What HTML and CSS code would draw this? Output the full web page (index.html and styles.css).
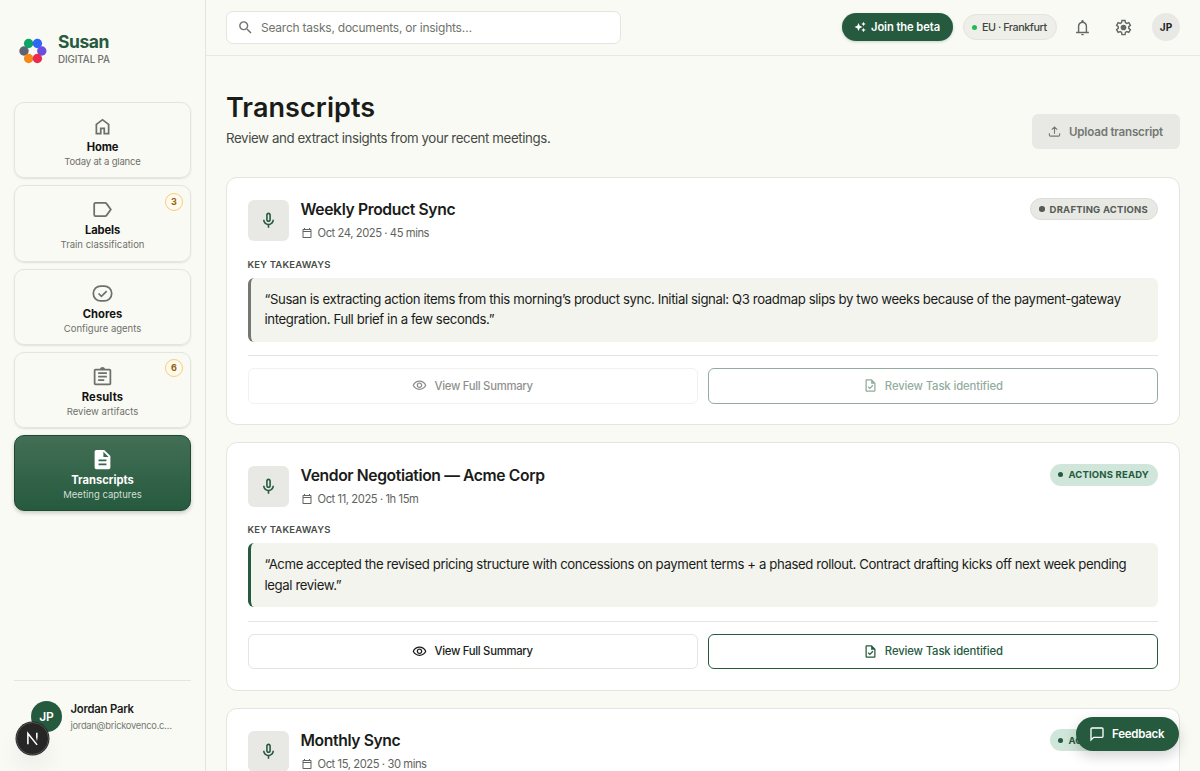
FILE: index.html
```html
<!DOCTYPE html>
<html lang="en">
<head>
<meta charset="utf-8">
<title>Susan – Transcripts</title>
<link rel="stylesheet" href="styles.css">
</head>
<body>
<svg class="defs" width="0" height="0">
  <symbol id="mic" viewBox="0 0 24 24"><path d="M12 14c1.660 0 3-1.340 3-3V5c0-1.660-1.340-3-3-3S9 3.340 9 5v6c0 1.660 1.340 3 3 3zm-1-9c0-.550.450-1 1-1s1 .450 1 1v6c0 .550-.450 1-1 1s-1-.450-1-1V5zm6 6c0 2.760-2.240 5-5 5s-5-2.240-5-5H5c0 3.530 2.610 6.430 6 6.920V21h2v-3.080c3.390-.490 6-3.390 6-6.920h-2z"/></symbol>
  <symbol id="cal" viewBox="0 0 24 24"><path d="M19 4h-1V2h-2v2H8V2H6v2H5c-1.100 0-2 .9-2 2v14c0 1.100.9 2 2 2h14c1.100 0 2-.9 2-2V6c0-1.100-.9-2-2-2zm0 16H5V10h14v10zm0-12H5V6h14v2z"/></symbol>
  <symbol id="eye" viewBox="0 0 24 24"><path d="M12 6c3.790 0 7.170 2.130 8.820 5.500C19.170 14.870 15.790 17 12 17s-7.170-2.130-8.820-5.500C4.830 8.130 8.210 6 12 6m0-2C7 4 2.730 7.110 1 11.500 2.730 15.890 7 19 12 19s9.270-3.110 11-7.500C21.270 7.110 17 4 12 4zm0 5c1.380 0 2.500 1.120 2.500 2.500S13.380 14 12 14s-2.500-1.120-2.500-2.500S10.620 9 12 9m0-2c-2.480 0-4.500 2.020-4.500 4.500S9.520 16 12 16s4.500-2.020 4.500-4.500S14.480 7 12 7z"/></symbol>
  <symbol id="task" viewBox="0 0 24 24"><path d="M14 2H6c-1.100 0-1.990.9-1.990 2L4 20c0 1.100.890 2 1.990 2H18c1.100 0 2-.9 2-2V8l-6-6zm4 18H6V4h7v5h5v11zm-9.180-6.950L7.400 14.460 10.940 18l5.660-5.660-1.410-1.410-4.240 4.240-2.130-2.120z"/></symbol>
</svg>
<div class="app">
  <aside class="sidebar">
    <div class="brand">
      <svg class="logo" viewBox="0 0 28 28"><circle cx="9.600" cy="6.500" r="4.700" fill="#0ca567"/><circle cx="18.400" cy="6.500" r="4.700" fill="#2a68f5"/><circle cx="5" cy="14" r="4.700" fill="#5b6470"/><circle cx="22.800" cy="14" r="4.700" fill="#6a4ee0"/><circle cx="9.600" cy="21.500" r="4.700" fill="#f58a1c"/><circle cx="18.400" cy="21.500" r="4.700" fill="#e92b50"/></svg>
      <div><div class="name">Susan</div><div class="tag">DIGITAL PA</div></div>
    </div>
    <nav class="nav">
      <a class="item"><svg viewBox="0 0 24 24"><path d="M6 19h3v-6h6v6h3v-9l-6-4.500L6 10v9zm-2 2V9l8-6 8 6v12h-7v-6h-2v6H4z"/></svg><b>Home</b><small>Today at a glance</small></a>
      <a class="item"><svg viewBox="0 0 24 24"><path class="line" d="M4 4.500h11a2 2 0 0 1 1.600.8L21.500 12l-4.900 6.700a2 2 0 0 1-1.600.8H4a1.500 1.500 0 0 1-1.500-1.500V6A1.500 1.500 0 0 1 4 4.500z"/></svg><b>Labels</b><small>Train classification</small><i class="count">3</i></a>
      <a class="item"><svg viewBox="0 0 24 24"><g class="line"><rect x="1.500" y="3.500" width="21" height="17" rx="8.500"/><path d="M7.500 12l3.300 3.300 6-6"/></g></svg><b>Chores</b><small>Configure agents</small></a>
      <a class="item"><svg viewBox="0 0 24 24"><path d="M7 15h7v2H7zm0-4h10v2H7zm0-4h10v2H7zm12-4h-4.180C14.400 1.840 13.300 1 12 1s-2.400.840-2.820 2H4c-1.100 0-2 .9-2 2v15c0 1.100.9 2 2 2h16c1.100 0 2-.9 2-2V5c0-1.100-.9-2-2-2zm1 17H4V5h16v15z"/></svg><b>Results</b><small>Review artifacts</small><i class="count">6</i></a>
      <a class="item active"><svg viewBox="0 0 24 24"><path d="M14 1H5c-1.100 0-2 .9-2 2v18c0 1.100.9 2 2 2h14c1.100 0 2-.9 2-2V8l-7-7zm2.500 17.500h-9v-2h9v2zm0-4.500h-9v-2h9v2zM13 9V3l6 6h-6z"/></svg><b>Transcripts</b><small>Meeting captures</small></a>
    </nav>
    <div class="user">
      <div class="avatar">JP</div>
      <div><div class="uname">Jordan Park</div><div class="mail">jordan@brickovenco.c…</div></div>
    </div>
  </aside>
  <div class="body">
    <header class="top">
      <div class="search"><svg viewBox="0 0 24 24"><path d="M15.500 14h-.790l-.280-.270A6.470 6.470 0 0 0 16 9.500 6.500 6.500 0 1 0 9.500 16c1.610 0 3.090-.590 4.230-1.570l.270.280v.790l5 4.990L20.490 19l-4.990-5zm-6 0C7.010 14 5 11.990 5 9.500S7.010 5 9.500 5 14 7.010 14 9.500 11.990 14 9.500 14z"/></svg><span>Search tasks, documents, or insights…</span></div>
      <div class="tools">
        <div class="beta"><svg viewBox="0 0 24 24"><path d="M9 4l2.400 5.600L17 12l-5.600 2.400L9 20l-2.400-5.600L1 12l5.600-2.400zM19 1.500l1.300 3.200 3.200 1.300-3.200 1.300L19 10.500l-1.300-3.200L14.500 6l3.200-1.300zM19 13.500l1.300 3.200 3.200 1.300-3.200 1.300-1.300 3.200-1.300-3.200-3.200-1.300 3.200-1.300z"/></svg><span>Join the beta</span></div>
        <div class="region"><i></i><span>EU · Frankfurt</span></div>
        <svg class="bell" viewBox="0 0 24 24"><path d="M3 20v-2h2.500v-8c0-3 2-5.400 4.800-6.100V3a1.700 1.700 0 0 1 3.400 0v.9C16.500 4.600 18.500 7 18.500 10v8H21v2H3zm9 3c-1.100 0-2-.9-2-2h4c0 1.100-.9 2-2 2zm-4.500-5h9v-8c0-2.500-2-4.500-4.500-4.500S7.500 7.500 7.500 10v8z"/></svg>
        <svg class="gear" viewBox="0 0 24 24"><path class="line" d="M9.800 2h4.400l.5 3 2 1.150 2.850-1.050 2.200 3.800-2.350 1.950v2.300l2.350 1.950-2.200 3.800-2.850-1.050-2 1.150-.5 3H9.800l-.5-3-2-1.150-2.850 1.050-2.200-3.800 2.350-1.950v-2.300L2.250 8.900l2.200-3.800L7.300 6.150 9.300 5z"/><circle cx="12" cy="12" r="4"/></svg>
        <div class="me">JP</div>
      </div>
    </header>
    <main class="main">
      <div class="head">
        <div><h1>Transcripts</h1><p>Review and extract insights from your recent meetings.</p></div>
        <div class="upload"><svg viewBox="0 0 24 24"><path class="line" d="M12 16V4M7 8.500l5-5 5 5M2.500 15v3.500a2 2 0 0 0 2 2h15a2 2 0 0 0 2-2V15"/></svg><span>Upload transcript</span></div>
      </div>
      <section class="card busy">
        <div class="row"><div class="mic"><svg><use href="#mic"/></svg></div>
          <div class="info"><h2>Weekly Product Sync</h2><div class="date"><svg><use href="#cal"/></svg><span>Oct 24, 2025 · 45 mins</span></div></div>
          <div class="pill"><i></i><span>DRAFTING ACTIONS</span></div></div>
        <h3>KEY TAKEAWAYS</h3>
        <blockquote>“Susan is extracting action items from this morning’s product sync. Initial signal: Q3 roadmap slips by two weeks because of the payment-gateway<br>integration. Full brief in a few seconds.”</blockquote>
        <div class="actions"><div class="btn"><svg><use href="#eye"/></svg><span>View Full Summary</span></div><div class="btn green"><svg><use href="#task"/></svg><span>Review Task identified</span></div></div>
      </section>
      <section class="card">
        <div class="row"><div class="mic"><svg><use href="#mic"/></svg></div>
          <div class="info"><h2>Vendor Negotiation — Acme Corp</h2><div class="date"><svg><use href="#cal"/></svg><span>Oct 11, 2025 · 1h 15m</span></div></div>
          <div class="pill"><i></i><span>ACTIONS READY</span></div></div>
        <h3>KEY TAKEAWAYS</h3>
        <blockquote>“Acme accepted the revised pricing structure with concessions on payment terms + a phased rollout. Contract drafting kicks off next week pending<br>legal review.”</blockquote>
        <div class="actions"><div class="btn"><svg><use href="#eye"/></svg><span>View Full Summary</span></div><div class="btn green"><svg><use href="#task"/></svg><span>Review Task identified</span></div></div>
      </section>
      <section class="card last">
        <div class="row"><div class="mic"><svg><use href="#mic"/></svg></div>
          <div class="info"><h2>Monthly Sync</h2><div class="date"><svg><use href="#cal"/></svg><span>Oct 15, 2025 · 30 mins</span></div></div>
          <div class="pill"><i></i><span>ACTIONS READY</span></div></div>
      </section>
    </main>
  </div>
</div>
<div class="devtool"><svg viewBox="0 0 24 24"><defs><linearGradient id="fade" x1="0" y1="0" x2="0" y2="1"><stop offset=".5" stop-color="#fff"/><stop offset="1" stop-color="#fff" stop-opacity="0"/></linearGradient></defs><path d="M5.500 20V5L18.500 21"/><path d="M17 4h2.200v12H17z" class="stem" fill="url(#fade)"/></svg></div>
<div class="feedback"><svg viewBox="0 0 24 24"><path class="line" d="M3 21V4.500A1.500 1.500 0 0 1 4.500 3h15A1.500 1.500 0 0 1 21 4.500v11a1.500 1.500 0 0 1-1.500 1.500H7z"/></svg><span>Feedback</span></div>
</body>
</html>
```

FILE: styles.css
```css
* { box-sizing: border-box; }
body { margin: 0; font-family: Inter, "Liberation Sans", sans-serif; background: #fafaf5; color: #1a1c19; overflow: hidden; height: 771px; }
svg { fill: currentColor; flex: none; display: block; }
.line { fill: none; stroke: currentColor; stroke-width: 2; }
.defs { position: absolute; }
.app { display: flex; height: 771px; overflow: hidden; }
.sidebar { width: 206px; flex: none; border-right: 1px solid #e4e5df; padding: 0 14px; display: flex; flex-direction: column; }
.brand { display: flex; align-items: center; gap: 11px; height: 102.400px; padding: 0 0 0 5px; }
.brand > div { margin-top: -2px; }
.logo { width: 28px; height: 28px; }
.name { font-size: 17.500px; font-weight: 700; line-height: 20px; letter-spacing: -.44px; color: #265a3e; }
.tag { font-size: 9.800px; font-weight: 500; line-height: 16px; letter-spacing: -.1px; color: #6c716b; }
.nav { display: flex; flex-direction: column; gap: 7px; }
.item { position: relative; height: 76.100px; border: 1px solid #e4e5df; border-radius: 10px; box-shadow: 0 1px 2px rgba(0,0,0,.1); display: flex; flex-direction: column; align-items: center; padding-top: 13px; color: #6d716b; }
.item svg { width: 21px; height: 21px; }
.item b { font-size: 11.200px; line-height: 15px; margin-top: 3px; color: #111311; }
.item:nth-child(1) b, .item:nth-child(2) b { letter-spacing: -.12px; }
.item:nth-child(4) b { letter-spacing: .12px; }
.item small { font-size: 9.500px; line-height: 14px; }
.item:nth-child(1) small { letter-spacing: -.17px; }
.count { position: absolute; right: 7px; top: 6.500px; width: 18px; height: 18px; border: 1px solid #f5cd80; border-radius: 9px; background: #fffaec; color: #8f5f10; font: 700 9px/16px Inter, sans-serif; text-align: center; }
.active { background: linear-gradient(#426f55, #265a3e); border-color: #20492f; color: #fff; box-shadow: 0 2px 4px rgba(0,0,0,.2); }
.active b { color: #fff; }
.active small { color: #d0dfd4; }
.user { margin-top: auto; height: 91px; border-top: 1px solid #e4e5df; padding: 19.500px 0 0 17px; display: flex; gap: 8.500px; }
.avatar { width: 31px; height: 31px; flex: none; border-radius: 50%; background: #265a3e; color: #fff; font-size: 12px; font-weight: 600; text-align: center; line-height: 31px; }
.uname { font-size: 11.300px; font-weight: 600; line-height: 17px; letter-spacing: -.22px; }
.mail { font-size: 9.400px; line-height: 16px; letter-spacing: -.29px; color: #767a74; }
.body { flex: 1; min-width: 0; }
.top { height: 55.500px; border-bottom: 1px solid #e7e8e2; padding: 0 20px; display: flex; align-items: center; justify-content: space-between; }
.search { width: 395px; height: 33px; border: 1px solid #e4e5df; border-radius: 7px; background: #fff; display: flex; align-items: center; gap: 7px; padding-left: 10px; font-size: 12px; letter-spacing: -.23px; color: #6f736d; }
.search svg { width: 17px; height: 17px; }
.search span { padding-top: 1px; }
.tools { display: flex; align-items: center; color: #646963; }
.beta { height: 28px; width: 111px; border-radius: 14px; background: #265a3e; color: #fff; display: flex; align-items: center; gap: 5px; padding-left: 12.500px; font-size: 11.200px; font-weight: 600; letter-spacing: -.09px; box-shadow: 0 1px 3px rgba(38,90,62,.25); }
.beta svg { width: 12px; height: 12px; }
.region { margin-left: 10px; width: 94px; height: 26px; border: 1px solid #e3e4de; border-radius: 13px; background: #eeefe9; display: flex; align-items: center; gap: 5px; padding-left: 8px; font-size: 10.800px; font-weight: 500; letter-spacing: -.46px; color: #41463f; white-space: nowrap; }
.region i { width: 5.500px; height: 5.500px; border-radius: 50%; background: #22b85a; }
.bell { width: 17px; height: 17px; margin-left: 17px; }
.gear { width: 17px; height: 17px; margin-left: 24px; }
.me { margin-left: 20.500px; width: 28px; height: 28px; border-radius: 50%; background: #e8e9e4; color: #222; font-size: 10px; font-weight: 700; line-height: 28px; text-align: center; }
.main { padding: 0 20.500px 0 20px; height: 715.500px; overflow: hidden; }
.head { display: flex; justify-content: space-between; align-items: flex-end; height: 93.500px; margin-bottom: 27.500px; }
h1 { margin: 0; font-size: 27px; font-weight: 600; line-height: 34px; letter-spacing: .08px; }
.head p { margin: 0; font-size: 13.300px; line-height: 21px; padding: 3.500px 0 0; letter-spacing: -.4px; color: #454a44; }
.upload { width: 147.500px; height: 35px; background: #e8e9e4; border-radius: 6px; display: flex; align-items: center; padding-left: 16px; gap: 8px; font-size: 11.600px; font-weight: 600; letter-spacing: -.2px; color: #737872; white-space: nowrap; }
.upload svg { width: 13px; height: 13px; }
.card { height: 248.500px; margin-bottom: 17.200px; background: #fff; border: 1px solid #e4e5df; border-radius: 11px; padding: 20.500px; }
.last { height: 90px; }
.row { display: flex; height: 59.500px; }
.mic { width: 41px; height: 41px; margin-top: 2px; border-radius: 6px; background: #e8e9e4; color: #265a3e; display: grid; place-items: center; }
.mic svg { width: 19px; height: 19px; }
.info { margin-left: 12px; flex: 1; }
h2 { margin: 0; font-size: 15.700px; font-weight: 600; line-height: 24px; letter-spacing: -.38px; }
.date { display: flex; gap: 5px; align-items: center; height: 22px; font-size: 11.200px; letter-spacing: -.42px; color: #5f645e; }
.date svg { width: 12px; height: 12px; }
.pill { height: 22px; border-radius: 11px; background: #d1e6da; color: #265a3e; display: flex; align-items: center; gap: 5px; padding: 0 9px 0 8px; font-size: 9.500px; font-weight: 700; letter-spacing: .18px; }
.pill i { width: 5.500px; height: 5.500px; border-radius: 50%; background: currentColor; }
.busy .pill { background: #e8e9e4; border: 1px solid #dcddd7; color: #565b55; letter-spacing: .22px; }
h3 { margin: 0; font-size: 9.500px; font-weight: 600; line-height: 13px; letter-spacing: .165px; color: #484d47; }
blockquote { margin: 7px 0 13.500px; height: 64px; padding: 11px 14px; border-left: 3px solid #265a3e; border-radius: 6px; background: #f3f4ee; font-size: 13.200px; line-height: 20.500px; letter-spacing: -.39px; white-space: nowrap; }
.busy blockquote { border-color: #737872; }
.actions { border-top: 1px solid #e4e5df; padding-top: 12px; display: grid; grid-template-columns: 1fr 1fr; gap: 10px; }
.btn { height: 35.500px; border: 1px solid #e4e5df; border-radius: 6px; display: flex; justify-content: center; align-items: center; gap: 7px; font-size: 11.300px; font-weight: 500; letter-spacing: -.28px; }
.btn svg { width: 15px; height: 15px; }
.green { color: #265a3e; border-color: #265a3e; letter-spacing: -.13px; }
.busy .btn { opacity: .5; }
.devtool { position: absolute; left: 16px; top: 722px; width: 33px; height: 33px; border-radius: 50%; background: #262626; border: 1px solid #555; display: grid; place-items: center; box-shadow: 0 0 0 .5px #222, 0 14px 24px rgba(0,0,0,.06); }
.devtool svg { width: 17px; height: 17px; fill: none; stroke: #fff; stroke-width: 2.200; }
.devtool .stem { stroke: none; }
.feedback { position: absolute; left: 1076px; top: 717px; width: 103px; height: 34px; border-radius: 17px; background: #265a3e; color: #fff; display: flex; align-items: center; gap: 7px; padding-left: 13px; font-size: 11.500px; font-weight: 600; letter-spacing: -.25px; box-shadow: 0 5px 14px rgba(0,0,0,.18); }
.feedback svg { width: 16px; height: 16px; }
```
